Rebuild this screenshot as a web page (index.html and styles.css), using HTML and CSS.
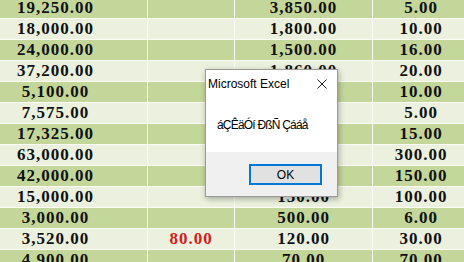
FILE: index.html
```html
<!DOCTYPE html>
<html lang="en">
<head>
    <meta charset="UTF-8">
    <title>Sheet</title>
    <link rel="stylesheet" href="styles.css">
</head>
<body>

    <div class="sheet">
        <div class="cell">19,250.00</div><div class="cell"></div><div class="cell">3,850.00</div><div class="cell">5.00</div>
        <div class="cell">18,000.00</div><div class="cell"></div><div class="cell">1,800.00</div><div class="cell">10.00</div>
        <div class="cell">24,000.00</div><div class="cell"></div><div class="cell">1,500.00</div><div class="cell">16.00</div>
        <div class="cell">37,200.00</div><div class="cell"></div><div class="cell">1,860.00</div><div class="cell">20.00</div>
        <div class="cell">5,100.00</div><div class="cell"></div><div class="cell"></div><div class="cell">10.00</div>
        <div class="cell">7,575.00</div><div class="cell"></div><div class="cell"></div><div class="cell">5.00</div>
        <div class="cell">17,325.00</div><div class="cell"></div><div class="cell"></div><div class="cell">15.00</div>
        <div class="cell">63,000.00</div><div class="cell"></div><div class="cell"></div><div class="cell">300.00</div>
        <div class="cell">42,000.00</div><div class="cell"></div><div class="cell"></div><div class="cell">150.00</div>
        <div class="cell">15,000.00</div><div class="cell"></div><div class="cell">150.00</div><div class="cell">100.00</div>
        <div class="cell">3,000.00</div><div class="cell"></div><div class="cell">500.00</div><div class="cell">6.00</div>
        <div class="cell">3,520.00</div><div class="cell red">80.00</div><div class="cell">120.00</div><div class="cell">30.00</div>
        <div class="cell">4,900.00</div><div class="cell"></div><div class="cell">70.00</div><div class="cell">70.00</div>
    </div>

    <!-- message box -->
    <div class="msgbox">
        <div class="msg-title">Microsoft Excel</div>
        <svg class="msg-close" width="10" height="10" viewBox="0 0 10 10">
            <path d="M0.5 0.5 L9.5 9.5 M9.5 0.5 L0.5 9.5" stroke="#1a1a1a" stroke-width="1" fill="none"/>
        </svg>
        <div class="msg-text">áÇÊäÓí ÐßÑ Çááå</div>
        <div class="msg-footer">
            <button class="msg-btn">OK</button>
        </div>
    </div>

</body>
</html>
```

FILE: styles.css
```css
body {
    margin: 0;
    width: 464px;
    height: 262px;
    overflow: hidden;
    position: relative;
    background-color: #fff;
}

/* spreadsheet, scrolled a bit to the left and down */
.sheet {
    display: grid;
    grid-template-columns: 183px 86px 137px 96px;
    grid-auto-rows: 20px;
    gap: 1px;
    background-color: #fbfcf4;
    margin-top: -2px;
    margin-left: -36px;
    font-family: "Liberation Serif", "Times New Roman", serif;
    font-weight: bold;
    font-size: 17px;
    letter-spacing: 1px;
    color: #111;
}

.cell {
    background-color: #c4d79b;
    line-height: 20px;
    text-align: center;
    white-space: nowrap;
}

/* every second row is the light one */
.cell:nth-child(8n+5),
.cell:nth-child(8n+6),
.cell:nth-child(8n+7),
.cell:nth-child(8n+8) {
    background-color: #ebf1de;
}

.cell.red {
    color: #d41c1c;
}

.msgbox {
    position: absolute;
    left: 205px;
    top: 69px;
    width: 133px;
    height: 128px;
    box-sizing: border-box;
    border: 1px solid #9a9a9a;
    background-color: #fff;
    box-shadow: 1px 2px 6px rgba(0, 0, 0, 0.3);
    font-family: "Liberation Sans", Arial, sans-serif;
    font-size: 12px;
    color: #000;
}

.msg-title {
    height: 20px;
    padding: 4px 0 6px 2px;
    line-height: 20px;
}

.msg-close {
    position: absolute;
    top: 9px;
    right: 10px;
}

.msg-text {
    height: 16px;
    padding: 17px 0 19px 11px;
    line-height: 16px;
    letter-spacing: -0.8px;
    white-space: nowrap;
}

.msg-footer {
    height: 44px;
    box-sizing: border-box;
    background-color: #f0f0f0;
    display: flex;
    justify-content: flex-end;
    padding: 12px 15px 0 0;
}

.msg-btn {
    width: 73px;
    height: 21px;
    box-sizing: border-box;
    border: 2px solid #0078d7;
    background-color: #e1e1e1;
    font-family: "Liberation Sans", Arial, sans-serif;
    font-size: 12px;
    padding: 0;
    color: #000;
}
```
